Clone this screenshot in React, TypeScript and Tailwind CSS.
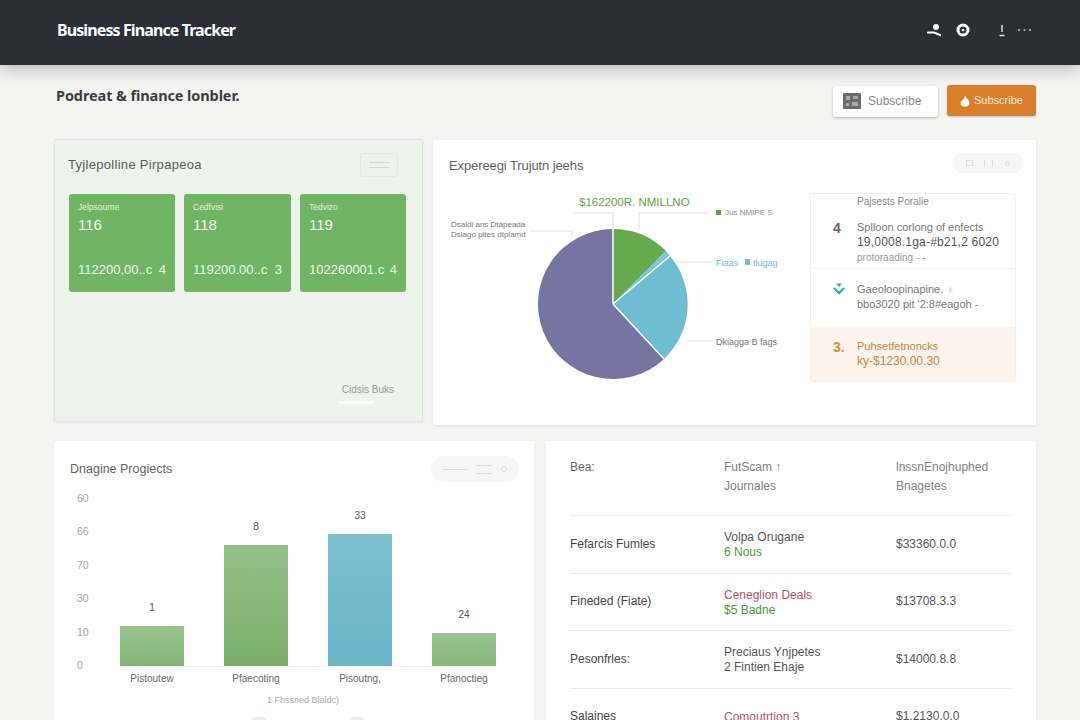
const sans = "font-['Liberation_Sans',Arial,sans-serif]";

function Tile({ label, num, amount, tail, w }: { label: string; num: string; amount: string; tail: string; w: string }) {
  return (
    <div className={`${w} h-[98px] rounded-[3px] bg-[#6fb563] px-[9px] pt-[7px] text-white flex flex-col shrink-0`}>
      <div className="text-[8.5px] leading-[12px] text-[#e2f1dc]">{label}</div>
      <div className="mt-[2px] text-[15px] leading-[20px] text-[#f4faf1]">{num}</div>
      <div className="mt-[26px] flex justify-between text-[13px] leading-[18px] text-[#f0f8ec] whitespace-nowrap">
        <span>{amount}</span>
        <span>{tail}</span>
      </div>
    </div>
  );
}

function Bar({ value, label, height, color }: { value: string; label: string; height: number; color: string }) {
  return (
    <div className="relative flex w-[64px] flex-col items-center justify-end">
      <span className="mb-[12px] text-[10px] leading-[12px] text-[#555]">{value}</span>
      <div className={`w-full ${color}`} style={{ height }} />
      <span className="absolute top-full mt-[7px] text-[10px] leading-[12px] text-[#666] whitespace-nowrap">{label}</span>
    </div>
  );
}

function Row({ a, b, c, d, bClass = "text-[#555]", cClass = "text-[#4a963f]" }: { a: string; b: string; c?: string; d: string; bClass?: string; cClass?: string }) {
  return (
    <div className="grid h-[57.5px] grid-cols-[154px_172px_1fr] items-center border-b border-[#ececec] text-[12px] leading-[15px] text-[#444]">
      <div>{a}</div>
      <div className="pt-[2px]">
        <div className={bClass}>{b}</div>
        {c && <div className={cClass}>{c}</div>}
      </div>
      <div className="text-[#555]">{d}</div>
    </div>
  );
}

export default function App() {
  return (
    <div className={`${sans} h-[720px] w-[1080px] overflow-hidden bg-[#f4f4f2]`}>
      <header className="relative flex h-[65px] items-center justify-between bg-[#2b2e35] pb-[5px] pl-[57px] pr-[48px] shadow-[0_4px_16px_rgba(0,0,0,0.25)]">
        <h1 className="font-['Noto_Sans',sans-serif] text-[16px] font-bold tracking-[-0.9px] text-white">Business Finance Tracker</h1>
        <div className="flex items-center">
          <svg width="16" height="14" viewBox="0 0 16 14" fill="none" className="mr-[13px]">
            <circle cx="9" cy="4" r="3" fill="#fff" />
            <path d="M1 9.5h6l6 2.5" stroke="#fff" strokeWidth="2.2" strokeLinecap="round" />
          </svg>
          <svg width="14" height="14" viewBox="0 0 14 14" fill="none" className="mr-[29px]">
            <circle cx="7" cy="7" r="5" stroke="#fff" strokeWidth="3" />
            <circle cx="7" cy="7" r="1.3" fill="#fff" />
          </svg>
          <svg width="6" height="13" viewBox="0 0 6 13" fill="none" className="mr-[12px]">
            <path d="M3 1v7" stroke="#e5e5e5" strokeWidth="1.5" />
            <path d="M0.5 11.5h5" stroke="#e5e5e5" strokeWidth="1.5" />
          </svg>
          <svg width="15" height="4" viewBox="0 0 15 4" fill="#bdbdbd">
            <circle cx="2" cy="2" r="1.1" />
            <circle cx="7.5" cy="2" r="1.1" />
            <circle cx="13" cy="2" r="1.1" />
          </svg>
        </div>
      </header>

      <main className="pl-[54px] pr-[44px]">
        <div className="flex h-[74px] items-start justify-between pt-[21px]">
          <h2 className="-mt-[1px] pl-[2px] font-['Noto_Sans',sans-serif] text-[14.5px] font-bold tracking-[-0.1px] text-[#3a3c40]">Podreat &amp; finance lonbler.</h2>
          <div className="flex items-start gap-[9px]">
            <button className="flex h-[31px] w-[105px] items-center gap-[7px] rounded-[3px] bg-white pb-[2px] pl-[10px] text-[12px] text-[#888] shadow-[0_1px_3px_rgba(0,0,0,0.25)]">
              <svg width="18" height="16" viewBox="0 0 18 16" fill="#6b6b6b">
                <rect x="0" y="0" width="18" height="16" rx="1" />
                <path d="M3 3h4v4H3zM10 3h5v3h-5zM3 10h3v3H3zM9 9h6v4H9z" fill="#a9a9a9" />
              </svg>
              Subscribe
            </button>
            <button className="-mt-[1px] flex h-[31px] w-[89px] items-center gap-[3px] rounded-[3px] bg-[#d97f2b] pl-[12px] text-[11px] text-[#fbe9d8] shadow-[0_1px_2px_rgba(0,0,0,0.2)]">
              <svg width="12" height="12" viewBox="0 0 12 12" fill="#fff">
                <path d="M6 0.5C6.6 2.6 10.5 5 10.5 8a4.5 3.8 0 0 1-9 0C1.5 6.5 3 5.5 3.7 4.6 4.6 5 5.6 3 6 0.5Z" />
              </svg>
              Subscribe
            </button>
          </div>
        </div>

        <div className="flex items-start gap-[10px]">
          <section className="relative h-[283px] w-[369px] rounded-[2px] border border-[#dbe7d5] bg-[#eef4eb] pl-[14px] shadow-[0_1px_3px_rgba(0,0,0,0.06)]">
            <div className="flex h-[54px] w-[329px] items-center justify-between pb-[4px]">
              <h3 className="-ml-[1px] text-[13px] tracking-[0.3px] text-[#56605b]">Tyjlepolline Pirpapeoa</h3>
              <div className="flex h-[24px] w-[38px] flex-col items-center justify-center gap-[4px] rounded-[3px] border border-[#e2e9df] bg-[#edf3ea]">
                <span className="h-px w-[20px] bg-[#d4dad1]" />
                <span className="h-px w-[20px] bg-[#d4dad1]" />
              </div>
            </div>
            <div className="flex gap-[9px]">
              <Tile w="w-[106px]" label="Jelpsoume" num="116" amount="112200,00..c" tail="4" />
              <Tile w="w-[107px]" label="Cedfvisi" num="118" amount="119200.00..c" tail="3" />
              <Tile w="w-[106px]" label="Tedvizo" num="119" amount="102260001.c" tail="4" />
            </div>
            <div className="absolute right-[28px] top-[244px] flex flex-col items-end">
              <span className="text-[10px] leading-[12px] text-[#929c96]">Cidsis Buks</span>
              <span className="mr-[20px] mt-[5px] h-[3px] w-[35px] bg-white" />
            </div>
          </section>

          <section className="mt-px flex h-[285px] flex-1 rounded-[2px] bg-white shadow-[0_1px_3px_rgba(0,0,0,0.08)]">
            <div className="relative w-[377px] shrink-0">
              <h3 className="absolute left-[16px] top-[16px] text-[13px] tracking-[-0.1px] text-[#5f5f5f]">Expereegi Trujutn jeehs</h3>
              <svg width="377" height="285" viewBox="0 0 377 285">
                <path d="M180 164 L180 89 A75 75 0 0 1 233 111 Z" fill="#67a94d" />
                <path d="M180 164 L233 111 A75 75 0 0 1 237 116 Z" fill="#7dc6d6" />
                <path d="M180 164 L237 116 A75 75 0 0 1 231 219 Z" fill="#6fbdd0" />
                <path d="M180 164 L231 219 A75 75 0 1 1 180 89 Z" fill="#7674a0" />
                <path d="M180 164 L180 89 M180 164 L237 116 M180 164 L231 219" stroke="#fff" strokeWidth="1.5" />
                <path d="M97 91H139V96M141 73H180V89M206 90V73H275M245 122H279M254 201H280" stroke="#d5d5d5" strokeWidth="0.8" fill="none" />
                <text x="146" y="66" fontSize="11.5" fill="#5aa43f">$162200R. NMILLNO</text>
                <text x="18" y="87" fontSize="8" fill="#777">Dsaldi ans Dtapeada</text>
                <text x="18" y="97" fontSize="8" fill="#777">Dsiago pltes dtplamd</text>
                <rect x="283" y="70" width="5" height="5" fill="#5aa43f" />
                <text x="292" y="75" fontSize="8" fill="#888">Jus NMIPE S</text>
                <text x="283" y="126" fontSize="9" fill="#74bccb">Fiaas</text>
                <rect x="312" y="119" width="5" height="6" fill="#74bccb" />
                <text x="320" y="126" fontSize="9" fill="#74bccb">tlugag</text>
                <text x="283" y="205" fontSize="9" fill="#777">Dkiagga B fags</text>
              </svg>
            </div>
            <div className="flex-1 pr-[20px]">
              <div className="flex h-[53px] justify-end pt-[13px]">
                <div className="-mr-[8px] flex h-[20px] w-[72px] items-center justify-around rounded-full bg-[#f6f6f6] px-[8px]">
                  <span className="h-[6px] w-[7px] border border-[#ddd]" />
                  <span className="h-[7px] w-[9px] border-x border-[#ddd]" />
                  <span className="h-[5px] w-[5px] rounded-full border border-[#ddd]" />
                </div>
              </div>
              <div className="h-[189px] w-[206px] rounded-[2px] border border-[#f0f0f0] text-[11px] leading-[15px] text-[#666]">
                <div className="h-[75px] border-b border-[#f3f3f3]">
                  <div className="pl-[46px] pt-[1px] text-[10px] leading-[14px] text-[#888]">Pajsests Poralie</div>
                  <div className="mt-[11px] flex">
                    <span className="w-[46px] pl-[22px] text-[14px] font-bold leading-[16px] text-[#666]">4</span>
                    <div>
                      <div className="text-[#777]">Splloon corlong of enfects</div>
                      <div className="whitespace-nowrap text-[12px] tracking-[0.2px] text-[#555]">19,0008.1ga-#b21,2 6020</div>
                      <div className="text-[10px] text-[#999]">protoraading - -</div>
                    </div>
                  </div>
                </div>
                <div className="flex h-[58px] pt-[13px]">
                  <span className="w-[46px] pl-[22px]">
                    <svg width="12" height="13" viewBox="0 0 12 13" fill="none">
                      <path d="M1 6l5 5 5-5" stroke="#35a9b8" strokeWidth="2.4" />
                      <path d="M3 1.5h6L6 5z" fill="#35a9b8" />
                    </svg>
                  </span>
                  <div className="text-[#777]">
                    <div>Gaeoloopinapine. <span className="text-[#8fc4cc]">♁</span></div>
                    <div className="whitespace-nowrap">bbo3020 pit '2:8#eagoh -</div>
                  </div>
                </div>
                <div className="flex h-[54px] bg-[#fbf3ec] pt-[12px]">
                  <span className="w-[46px] pl-[22px] text-[14px] font-bold leading-[16px] text-[#d39138]">3.</span>
                  <div className="text-[#c28a3f]">
                    <div>Puhsetfetnoncks</div>
                    <div className="text-[12px]">ky-$1230.00.30</div>
                  </div>
                </div>
              </div>
            </div>
          </section>
        </div>

        <div className="mt-[16px] flex items-start gap-[12px]">
          <section className="h-[300px] w-[480px] shrink-0 rounded-[2px] bg-white pl-[16px] pr-[15px] shadow-[0_1px_3px_rgba(0,0,0,0.06)]">
            <div className="flex h-[56px] items-center justify-between">
              <h3 className="text-[12.5px] text-[#5f5f5f]">Dnagine Progiects</h3>
              <div className="flex h-[26px] w-[88px] items-center justify-around rounded-full bg-[#f6f6f6] px-[8px]">
                <span className="h-px w-[25px] bg-[#ddd]" />
                <span className="h-[9px] w-[16px] border-y border-[#ddd]" />
                <span className="h-[6px] w-[6px] rounded-full border border-[#ddd]" />
              </div>
            </div>
            <div className="flex h-[170px]">
              <div className="-mt-[5px] flex h-[179px] w-[49px] flex-col justify-between pl-[7px] text-[10.5px] leading-[12px] text-[#a3a3a3]">
                <span>60</span>
                <span>66</span>
                <span>70</span>
                <span>30</span>
                <span>10</span>
                <span>0</span>
              </div>
              <div className="flex h-[170px] w-[377px] items-end justify-between border-b border-[#eeeeee] pl-[1px]">
                <Bar value="1" label="Pistoutew" height={40} color="bg-gradient-to-b from-[#9ac48f] to-[#82b677]" />
                <Bar value="8" label="Pfaecoting" height={121} color="bg-gradient-to-b from-[#94c087] to-[#78b06b]" />
                <Bar value="33" label="Pisoutng," height={132} color="bg-gradient-to-b from-[#7cbfd0] to-[#69b6c9]" />
                <Bar value="24" label="Pfanoctieg" height={33} color="bg-gradient-to-b from-[#9ac48f] to-[#84b879]" />
              </div>
            </div>
            <div className="mt-[28px] pl-[17px] text-center text-[9px] leading-[11px] text-[#aaa]">1 Fhssned Blaldc)</div>
            <div className="mt-[11px] flex justify-center gap-[84px] pl-[26px]">
              <span className="h-[6px] w-[14px] rounded-full bg-[#e3eff2]" />
              <span className="h-[6px] w-[14px] rounded-full bg-[#eeeeee]" />
            </div>
          </section>

          <section className="h-[300px] flex-1 rounded-[2px] bg-white pl-[24px] pr-[23px] shadow-[0_1px_3px_rgba(0,0,0,0.06)]">
            <div className="grid h-[75px] grid-cols-[154px_172px_1fr] border-b border-[#ececec] pt-[17px] text-[12px] leading-[19px] text-[#808080]">
              <div className="text-[#666]">Bea:</div>
              <div>FutScam ↑<br />Journales</div>
              <div>lnssnEnojhuphed<br />Bnagetes</div>
            </div>
            <Row a="Fefarcis Fumles" b="Volpa Orugane" c="6 Nous" d="$33360.0.0" />
            <Row a="Fineded (Fiate)" b="Ceneglion Deals" bClass="text-[#b5525f]" c="$5 Badne" d="$13708.3.3" />
            <Row a="Pesonfrles:" b="Preciaus Ynjpetes" c="2 Fintien Ehaje" cClass="text-[#555]" d="$14000.8.8" />
            <Row a="Salaines" b="Comoutrtion 3" bClass="text-[#b5525f]" d="$1.2130.0.0" />
          </section>
        </div>
      </main>
    </div>
  );
}
